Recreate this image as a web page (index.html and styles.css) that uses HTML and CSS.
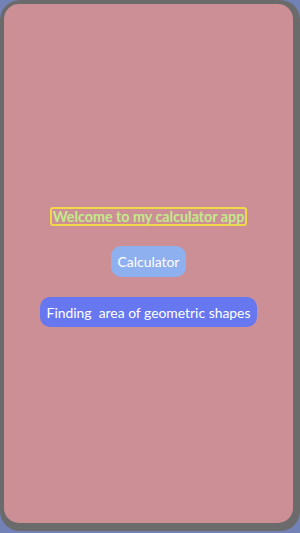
FILE: index.html
```html
<!DOCTYPE html>
<html>
<head>
<meta charset="utf-8">
<link rel="stylesheet" href="styles.css">
</head>
<body>
<div class="device">
  <div class="screen">
    <div class="title">Welcome to my calculator app</div>
    <button class="btn btn-calc">Calculator</button>
    <button class="btn btn-area">Finding&nbsp; area of geometric shapes</button>
  </div>
</div>
</body>
</html>
```
FILE: styles.css
```css
html, body {
  margin: 0;
  padding: 0;
  width: 300px;
  height: 533px;
  background: #7282b6;
  overflow: hidden;
}
.device {
  box-sizing: border-box;
  width: 300px;
  height: 531px;
  background: #6b6b6b;
  border-radius: 20px;
  padding: 4px 7px 8px 4px;
}
.screen {
  box-sizing: border-box;
  height: 100%;
  background: #cc8f96;
  border-radius: 15px;
  display: flex;
  flex-direction: column;
  align-items: center;
  justify-content: center;
  padding-top: 7px;
  font-family: "Lato", "Noto Sans", sans-serif;
}
.title {
  border: 2px solid #f0d84a;
  border-radius: 3px;
  color: #c3ea8a;
  font-weight: bold;
  font-size: 14.3px;
  line-height: 15px;
  padding: 0 1px;
  white-space: nowrap;
}
.btn {
  border: none;
  color: #ffffff;
  font-family: "Lato", "Noto Sans", sans-serif;
  font-size: 13.9px;
  border-radius: 10px;
  white-space: nowrap;
}
.btn-calc {
  margin-top: 20px;
  background: #8fb0ef;
  height: 31px;
  padding: 0 7px;
}
.btn-area {
  margin-top: 20px;
  background: #6677f0;
  height: 30px;
  padding: 0 7px;
}
```
